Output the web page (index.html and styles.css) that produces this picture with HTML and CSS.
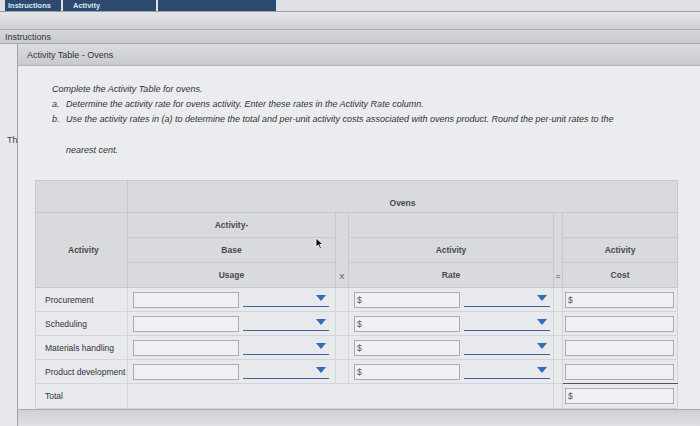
FILE: index.html
```html
<!DOCTYPE html>
<html>
<head>
<meta charset="utf-8">
<link rel="stylesheet" href="styles.css">
</head>
<body>
<div class="tabs">
  <div class="tab t1">Instructions</div>
  <div class="tab t2">Activity</div>
  <div class="tab t3"></div>
</div>
<div class="toolbar"></div>
<div class="instr-bar">Instructions</div>
<div class="main">
  <div class="strip"><span class="th">Th</span></div>
  <div class="panel">
    <div class="panel-header">Activity Table - Ovens</div>
    <div class="panel-body">
      <div class="instructions">
        <p class="lead">Complete the Activity Table for ovens.</p>
        <p class="item"><span class="mk">a.</span><span>Determine the activity rate for ovens activity. Enter these rates in the Activity Rate column.</span></p>
        <p class="item"><span class="mk">b.</span><span>Use the activity rates in (a) to determine the total and per-unit activity costs associated with ovens product. Round the per-unit rates to the<span class="wrap">nearest cent.</span></span></p>
      </div>
      <table class="grid">
        <colgroup>
          <col class="w-act"><col class="w-use"><col class="w-op"><col class="w-rate"><col class="w-eq"><col class="w-cost">
        </colgroup>
        <tr class="h0">
          <td class="hd"></td>
          <td class="hd ovens" colspan="5">Ovens</td>
        </tr>
        <tr class="hr">
          <td class="hd act" rowspan="3">Activity</td>
          <td class="hd">Activity-</td>
          <td class="hd op" rowspan="3">X</td>
          <td class="hd"></td>
          <td class="hd op" rowspan="3">=</td>
          <td class="hd"></td>
        </tr>
        <tr class="hr">
          <td class="hd">Base</td>
          <td class="hd">Activity</td>
          <td class="hd">Activity</td>
        </tr>
        <tr class="hr">
          <td class="hd">Usage</td>
          <td class="hd">Rate</td>
          <td class="hd">Cost</td>
        </tr>
        <tr class="dr">
          <td class="lbl">Procurement</td>
          <td><div class="pair"><span class="inp"></span><span class="dd"><i></i></span></div></td>
          <td class="opd"></td>
          <td><div class="pair"><span class="inp">$</span><span class="dd"><i></i></span></div></td>
          <td class="opd"></td>
          <td><span class="inp wide">$</span></td>
        </tr>
        <tr class="dr">
          <td class="lbl">Scheduling</td>
          <td><div class="pair"><span class="inp"></span><span class="dd"><i></i></span></div></td>
          <td class="opd"></td>
          <td><div class="pair"><span class="inp">$</span><span class="dd"><i></i></span></div></td>
          <td class="opd"></td>
          <td><span class="inp wide"></span></td>
        </tr>
        <tr class="dr">
          <td class="lbl">Materials handling</td>
          <td><div class="pair"><span class="inp"></span><span class="dd"><i></i></span></div></td>
          <td class="opd"></td>
          <td><div class="pair"><span class="inp">$</span><span class="dd"><i></i></span></div></td>
          <td class="opd"></td>
          <td><span class="inp wide"></span></td>
        </tr>
        <tr class="dr">
          <td class="lbl">Product development</td>
          <td><div class="pair"><span class="inp"></span><span class="dd"><i></i></span></div></td>
          <td class="opd"></td>
          <td><div class="pair"><span class="inp">$</span><span class="dd"><i></i></span></div></td>
          <td class="opd"></td>
          <td class="sum"><span class="inp wide"></span></td>
        </tr>
        <tr class="dr total">
          <td class="lbl">Total</td>
          <td colspan="3"></td>
          <td class="opd"></td>
          <td><span class="inp wide">$</span></td>
        </tr>
      </table>
      <svg class="cursor" width="9" height="13" viewBox="0 0 9 13"><path d="M1 1 L1 10 L3.3 8 L5 12 L6.5 11.3 L4.8 7.5 L8 7.5 Z" fill="#111" stroke="#fff" stroke-width="0.8"/></svg>
    </div>
    <div class="footer"></div>
  </div>
</div>
</body>
</html>
```

FILE: styles.css
```css
html, body {
  margin: 0;
  padding: 0;
}
body {
  width: 700px;
  height: 426px;
  overflow: hidden;
  background: #e4e6ea;
  font-family: "Liberation Sans", Arial, sans-serif;
  color: #333;
}
.tabs {
  height: 11px;
  display: flex;
  gap: 2px;
  padding-left: 5px;
  background: #dfe1e4;
  border-bottom: 1px solid #9a9ea4;
}
.tab {
  background: #2c4a6d;
  height: 11px;
  color: #dfe6ef;
  font-size: 7.5px;
  font-weight: bold;
  line-height: 11px;
  padding-left: 3px;
  box-sizing: border-box;
  white-space: nowrap;
}
.t1 { width: 56px; }
.t2 { width: 93px; padding-left: 10px; }
.t3 { width: 118px; }
.toolbar {
  height: 17px;
  background: linear-gradient(#e3e5e8, #cfd1d4);
  border-bottom: 1px solid #a9acb0;
}
.instr-bar {
  height: 13px;
  line-height: 14px;
  padding-left: 5px;
  font-size: 9px;
  color: #333;
  background: linear-gradient(#d4d6d9, #c9cbce);
  border-bottom: 1px solid #a5a8ac;
}
.main {
  display: flex;
  height: 383px;
}
.strip {
  width: 17px;
  background: #e6e8ec;
  border-right: 1px solid #9fa2a7;
  position: relative;
}
.th {
  position: absolute;
  left: 7px;
  top: 91px;
  font-size: 9px;
  color: #444;
}
.panel {
  flex: 1;
  display: flex;
  flex-direction: column;
  background: #eaecf0;
}
.panel-header {
  height: 21px;
  line-height: 22px;
  padding-left: 9px;
  font-size: 9px;
  color: #333;
  background: linear-gradient(#dadcdf, #c8cacd);
  border-bottom: 1px solid #b2b5b9;
}
.panel-body {
  flex: 1;
  padding: 16px 0 0 17px;
  position: relative;
}
.instructions {
  padding-left: 17px;
  font-size: 9px;
  font-style: italic;
  color: #333;
}
.instructions p {
  margin: 0;
  line-height: 15px;
}
.item {
  display: flex;
}
.mk {
  width: 14px;
  flex: none;
}
.wrap {
  display: block;
  margin-top: 16px;
}
.grid {
  margin-top: 22px;
  border-collapse: collapse;
  table-layout: fixed;
  width: 642px;
  font-size: 8.5px;
}
.w-act { width: 92px; }
.w-use { width: 208px; }
.w-op { width: 13px; }
.w-rate { width: 205px; }
.w-eq { width: 9px; }
.w-cost { width: 115px; }
.grid td {
  border: 1px solid #c6c8cc;
  padding: 0;
}
.hd {
  background: #d8dadd;
  text-align: center;
  font-weight: bold;
  color: #4a4a4a;
}
.h0 td { height: 27px; }
.ovens { vertical-align: bottom; padding-bottom: 4px !important; }
.hr td { height: 24px; }
.act { text-align: left; padding-left: 32px !important; }
.op {
  vertical-align: bottom;
  padding-bottom: 6px !important;
  font-weight: normal;
  font-size: 8px;
}
.dr td {
  height: 23px;
  background: #e7e9ec;
  border-color: #d2d4d7;
}
.dr .lbl {
  padding-left: 9px;
  font-size: 8.5px;
  color: #333;
  white-space: nowrap;
  overflow: visible;
}
.pair {
  display: flex;
  align-items: center;
  gap: 4px;
  padding-left: 5px;
}
.inp {
  display: block;
  box-sizing: border-box;
  width: 106px;
  height: 16px;
  border: 1px solid #a9acb1;
  background: #eef0f2;
  font-size: 8.5px;
  line-height: 14px;
  padding-left: 2px;
  color: #555;
}
.inp.wide {
  width: 109px;
  margin-left: 2px;
}
.dd {
  position: relative;
  display: block;
  width: 86px;
  height: 14px;
  border-bottom: 1.5px solid #3c6291;
}
.dd i {
  position: absolute;
  right: 3px;
  top: 3px;
  width: 0;
  height: 0;
  border-left: 5px solid transparent;
  border-right: 5px solid transparent;
  border-top: 6px solid #2f6db5;
}
.sum {
  border-bottom: 1.5px solid #555 !important;
}
.total td {
  height: 24px;
}
.cursor {
  position: absolute;
  left: 297px;
  top: 171px;
}
.footer {
  height: 17px;
  background: linear-gradient(#cfd1d4, #dfe1e4);
  border-top: 1px solid #a7aaae;
}
```
